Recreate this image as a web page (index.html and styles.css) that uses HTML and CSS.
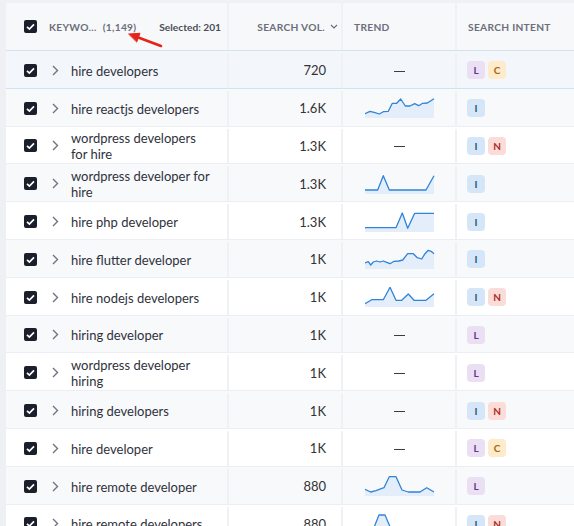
FILE: index.html
```html
<!DOCTYPE html>
<html lang="en">
<head>
  <meta charset="UTF-8" />
  <title>Keywords</title>
  <link rel="stylesheet" href="styles.css">
</head>
<body>
<div class="page">
  <div class="table">
    <div class="row head">
      <div class="cell kw">
        <span class="check"><svg viewBox="0 0 13 13"><path d="M3 6.8l2.4 2.3L10 4.3" /></svg></span>
        <span class="title">KEYWO...</span>
        <span class="count">(1,149)</span>
        <span class="selected">Selected: 201</span>
      </div>
      <div class="cell vol">SEARCH VOL. <svg class="sort" viewBox="0 0 8 5"><path d="M1 1l3 3 3-3" /></svg></div>
      <div class="cell trend">TREND</div>
      <div class="cell intent">SEARCH INTENT</div>
    </div>

    <div class="row active">
      <div class="cell kw"><span class="check"><svg viewBox="0 0 13 13"><path d="M3 6.8l2.4 2.3L10 4.3" /></svg></span><svg class="chev" viewBox="0 0 7 11"><path d="M1 1l4.5 4.5L1 10" /></svg><span class="text">hire developers</span></div>
      <div class="cell vol">720</div>
      <div class="cell trend"><span class="dash"></span></div>
      <div class="cell intent"><span class="badge l">L</span><span class="badge c">C</span></div>
    </div>

    <div class="row">
      <div class="cell kw"><span class="check"><svg viewBox="0 0 13 13"><path d="M3 6.8l2.4 2.3L10 4.3" /></svg></span><svg class="chev" viewBox="0 0 7 11"><path d="M1 1l4.5 4.5L1 10" /></svg><span class="text">hire reactjs developers</span></div>
      <div class="cell vol">1.6K</div>
      <div class="cell trend"><svg class="spark" viewBox="0 0 70 20"><polygon points="0,15.7 5,13.3 10,14.7 14.3,16 18.3,13.7 23.3,13.3 27.3,5.3 31.7,5.3 35.7,1 40.3,8 45,8 49.7,5.7 53.7,7.7 57.7,5.3 62.3,5 69,0.7 69,20 0,20" /><polyline points="0,15.7 5,13.3 10,14.7 14.3,16 18.3,13.7 23.3,13.3 27.3,5.3 31.7,5.3 35.7,1 40.3,8 45,8 49.7,5.7 53.7,7.7 57.7,5.3 62.3,5 69,0.7" /></svg></div>
      <div class="cell intent"><span class="badge i">I</span></div>
    </div>

    <div class="row">
      <div class="cell kw"><span class="check"><svg viewBox="0 0 13 13"><path d="M3 6.8l2.4 2.3L10 4.3" /></svg></span><svg class="chev" viewBox="0 0 7 11"><path d="M1 1l4.5 4.5L1 10" /></svg><span class="text">wordpress developers for hire</span></div>
      <div class="cell vol">1.3K</div>
      <div class="cell trend"><span class="dash"></span></div>
      <div class="cell intent"><span class="badge i">I</span><span class="badge n">N</span></div>
    </div>

    <div class="row">
      <div class="cell kw"><span class="check"><svg viewBox="0 0 13 13"><path d="M3 6.8l2.4 2.3L10 4.3" /></svg></span><svg class="chev" viewBox="0 0 7 11"><path d="M1 1l4.5 4.5L1 10" /></svg><span class="text">wordpress developer for hire</span></div>
      <div class="cell vol">1.3K</div>
      <div class="cell trend"><svg class="spark" viewBox="0 0 70 20"><polygon points="0,16 12.7,16 18.3,1.7 24.3,16 61,16 69,1.7 69,20 0,20" /><polyline points="0,16 12.7,16 18.3,1.7 24.3,16 61,16 69,1.7" /></svg></div>
      <div class="cell intent"><span class="badge i">I</span></div>
    </div>

    <div class="row">
      <div class="cell kw"><span class="check"><svg viewBox="0 0 13 13"><path d="M3 6.8l2.4 2.3L10 4.3" /></svg></span><svg class="chev" viewBox="0 0 7 11"><path d="M1 1l4.5 4.5L1 10" /></svg><span class="text">hire php developer</span></div>
      <div class="cell vol">1.3K</div>
      <div class="cell trend"><svg class="spark" viewBox="0 0 70 20"><polygon points="0,15.7 31,15.7 37.3,1 42.7,16.3 49.7,1.3 69,1.3 69,20 0,20" /><polyline points="0,15.7 31,15.7 37.3,1 42.7,16.3 49.7,1.3 69,1.3" /></svg></div>
      <div class="cell intent"><span class="badge i">I</span></div>
    </div>

    <div class="row">
      <div class="cell kw"><span class="check"><svg viewBox="0 0 13 13"><path d="M3 6.8l2.4 2.3L10 4.3" /></svg></span><svg class="chev" viewBox="0 0 7 11"><path d="M1 1l4.5 4.5L1 10" /></svg><span class="text">hire flutter developer</span></div>
      <div class="cell vol">1K</div>
      <div class="cell trend"><svg class="spark" viewBox="0 0 70 20"><polygon points="0,14 3.3,12.7 5.7,16 8.3,13 11.7,12 15,13 18.3,12 21.7,13.3 25,14.7 29,12.3 33.7,12 37.7,11 42.7,4.7 48.3,4.7 52.3,8.7 56.7,10 60,4.7 63.3,1.3 66.7,2.7 69,4.7 69,20 0,20" /><polyline points="0,14 3.3,12.7 5.7,16 8.3,13 11.7,12 15,13 18.3,12 21.7,13.3 25,14.7 29,12.3 33.7,12 37.7,11 42.7,4.7 48.3,4.7 52.3,8.7 56.7,10 60,4.7 63.3,1.3 66.7,2.7 69,4.7" /></svg></div>
      <div class="cell intent"><span class="badge i">I</span></div>
    </div>

    <div class="row">
      <div class="cell kw"><span class="check"><svg viewBox="0 0 13 13"><path d="M3 6.8l2.4 2.3L10 4.3" /></svg></span><svg class="chev" viewBox="0 0 7 11"><path d="M1 1l4.5 4.5L1 10" /></svg><span class="text">hire nodejs developers</span></div>
      <div class="cell vol">1K</div>
      <div class="cell trend"><svg class="spark" viewBox="0 0 70 20"><polygon points="0,16.7 6.7,12.7 18.3,12.7 25,0.3 31,13.3 36.7,13.3 43.3,7 49,13.3 61,13.3 69,6.7 69,20 0,20" /><polyline points="0,16.7 6.7,12.7 18.3,12.7 25,0.3 31,13.3 36.7,13.3 43.3,7 49,13.3 61,13.3 69,6.7" /></svg></div>
      <div class="cell intent"><span class="badge i">I</span><span class="badge n">N</span></div>
    </div>

    <div class="row">
      <div class="cell kw"><span class="check"><svg viewBox="0 0 13 13"><path d="M3 6.8l2.4 2.3L10 4.3" /></svg></span><svg class="chev" viewBox="0 0 7 11"><path d="M1 1l4.5 4.5L1 10" /></svg><span class="text">hiring developer</span></div>
      <div class="cell vol">1K</div>
      <div class="cell trend"><span class="dash"></span></div>
      <div class="cell intent"><span class="badge l">L</span></div>
    </div>

    <div class="row">
      <div class="cell kw"><span class="check"><svg viewBox="0 0 13 13"><path d="M3 6.8l2.4 2.3L10 4.3" /></svg></span><svg class="chev" viewBox="0 0 7 11"><path d="M1 1l4.5 4.5L1 10" /></svg><span class="text">wordpress developer hiring</span></div>
      <div class="cell vol">1K</div>
      <div class="cell trend"><span class="dash"></span></div>
      <div class="cell intent"><span class="badge l">L</span></div>
    </div>

    <div class="row">
      <div class="cell kw"><span class="check"><svg viewBox="0 0 13 13"><path d="M3 6.8l2.4 2.3L10 4.3" /></svg></span><svg class="chev" viewBox="0 0 7 11"><path d="M1 1l4.5 4.5L1 10" /></svg><span class="text">hiring developers</span></div>
      <div class="cell vol">1K</div>
      <div class="cell trend"><span class="dash"></span></div>
      <div class="cell intent"><span class="badge i">I</span><span class="badge n">N</span></div>
    </div>

    <div class="row">
      <div class="cell kw"><span class="check"><svg viewBox="0 0 13 13"><path d="M3 6.8l2.4 2.3L10 4.3" /></svg></span><svg class="chev" viewBox="0 0 7 11"><path d="M1 1l4.5 4.5L1 10" /></svg><span class="text">hire developer</span></div>
      <div class="cell vol">1K</div>
      <div class="cell trend"><span class="dash"></span></div>
      <div class="cell intent"><span class="badge l">L</span><span class="badge c">C</span></div>
    </div>

    <div class="row">
      <div class="cell kw"><span class="check"><svg viewBox="0 0 13 13"><path d="M3 6.8l2.4 2.3L10 4.3" /></svg></span><svg class="chev" viewBox="0 0 7 11"><path d="M1 1l4.5 4.5L1 10" /></svg><span class="text">hire remote developer</span></div>
      <div class="cell vol">880</div>
      <div class="cell trend"><svg class="spark" viewBox="0 0 70 20"><polygon points="0,13.3 5.7,16 11,14.7 19,11.7 24.3,0.7 31,0.7 37,14 43.3,16 55,16 61.7,11.7 69,16 69,20 0,20" /><polyline points="0,13.3 5.7,16 11,14.7 19,11.7 24.3,0.7 31,0.7 37,14 43.3,16 55,16 61.7,11.7 69,16" /></svg></div>
      <div class="cell intent"><span class="badge l">L</span></div>
    </div>

    <div class="row">
      <div class="cell kw"><span class="check"><svg viewBox="0 0 13 13"><path d="M3 6.8l2.4 2.3L10 4.3" /></svg></span><svg class="chev" viewBox="0 0 7 11"><path d="M1 1l4.5 4.5L1 10" /></svg><span class="text">hire remote developers</span></div>
      <div class="cell vol">880</div>
      <div class="cell trend"><svg class="spark" viewBox="0 0 70 20"><polygon points="0,16 8,16 14,1 20,1 26,15 40,15 52,16 58,15 69,16 69,20 0,20" /><polyline points="0,16 8,16 14,1 20,1 26,15 40,15 52,16 58,15 69,16" /></svg></div>
      <div class="cell intent"><span class="badge i">I</span><span class="badge n">N</span></div>
    </div>
  </div>

  <!-- annotation arrow pointing at the keyword count -->
  <svg class="arrow" viewBox="0 0 42 22">
    <path d="M37 18L11 8.2" />
    <path class="head" d="M5 6L16 5.3L12.8 13.7Z" />
  </svg>
</div>
</body>
</html>
```

FILE: styles.css
```css
body {
  margin: 0;
  font-family: Lato, "Liberation Sans", sans-serif;
  color: #333;
  background-color: #eef0f4;
  overflow: hidden;
}

.page {
  position: relative;
  padding-left: 6px;
  height: 526px;
  overflow: hidden;
}

.table {
  background-color: white;
  border-top: 3px solid #f0f1f5;
  width: 640px;
}

.row {
  display: grid;
  grid-template-columns: 223px 114px 114px 1fr;
  box-sizing: border-box;
  height: 37.8px;
  padding-top: 2px;
  border-bottom: 1px solid #eceef3;
}

.row:nth-child(odd) {
  background-color: #f8f9fb;
}

.row.head {
  height: 48px;
  padding-top: 0;
  background-color: #f7f8fa;
  border-bottom: 1px solid #d3e2f3;
}

.row.active {
  background-color: #f3f7fc;
  border-bottom-color: #d3e2f3;
}

.cell {
  display: flex;
  align-items: center;
  border-right: 2px solid #f0f1f5;
  font-size: 13px;
}

.cell.kw {
  padding-left: 18px;
}

.cell.vol {
  justify-content: flex-end;
  padding-right: 15px;
}

.cell.trend {
  justify-content: center;
}

.cell.intent {
  padding-left: 10px;
  gap: 3px;
  border-right: none;
}

.check {
  width: 13px;
  height: 13px;
  flex: none;
  background-color: #1b1e2b;
  border-radius: 2px;
  display: flex;
}

.check svg {
  width: 13px;
  height: 13px;
  fill: none;
  stroke: white;
  stroke-width: 1.7;
}

.chev {
  width: 7px;
  height: 11px;
  margin-left: 15px;
  margin-right: 12px;
  flex: none;
  fill: none;
  stroke: #6f7380;
  stroke-width: 1.4;
}

.text {
  max-width: 142px;
  line-height: 16px;
  color: #2f323b;
  padding-top: 1px;
}

.head .cell {
  font-size: 10.2px;
  font-weight: bold;
  letter-spacing: 0.3px;
  color: #6b6f7b;
}

.head .trend,
.head .intent {
  justify-content: flex-start;
  padding-left: 11px;
}

.head .title {
  margin-left: 12px;
}

.head .count {
  margin-left: 6px;
}

.head .selected {
  margin-left: auto;
  margin-right: 6px;
  color: #4a4d57;
  letter-spacing: 0;
}

.head .vol {
  padding-right: 3px;
}

.sort {
  width: 8px;
  height: 5px;
  margin-left: 5px;
  fill: none;
  stroke: #6b6f7b;
  stroke-width: 1.2;
}

.dash {
  width: 11px;
  height: 1px;
  margin-top: 2px;
  background-color: #3a3c44;
}

.spark {
  width: 70px;
  height: 20px;
  margin-left: 2px;
}

.spark polygon {
  fill: #e3eefa;
}

.spark polyline {
  fill: none;
  stroke: #2f84d8;
  stroke-width: 1.3;
  stroke-linejoin: round;
}

.badge {
  width: 18px;
  height: 18px;
  border-radius: 4px;
  font-size: 10px;
  font-weight: bold;
  display: flex;
  align-items: center;
  justify-content: center;
}

.badge.l {
  background-color: #eadff3;
  color: #6b3296;
}

.badge.c {
  background-color: #fdebcc;
  color: #a8680c;
}

.badge.i {
  background-color: #d4e6f7;
  color: #2b4f78;
}

.badge.n {
  background-color: #fbdcd8;
  color: #ad2d26;
}

.arrow {
  position: absolute;
  left: 124px;
  top: 28px;
  width: 42px;
  height: 22px;
  overflow: visible;
}

.arrow path {
  fill: none;
  stroke: #e5231b;
  stroke-width: 2.6;
  stroke-linecap: round;
}

.arrow .head {
  fill: #e5231b;
  stroke-width: 1;
  stroke-linejoin: round;
}
```
